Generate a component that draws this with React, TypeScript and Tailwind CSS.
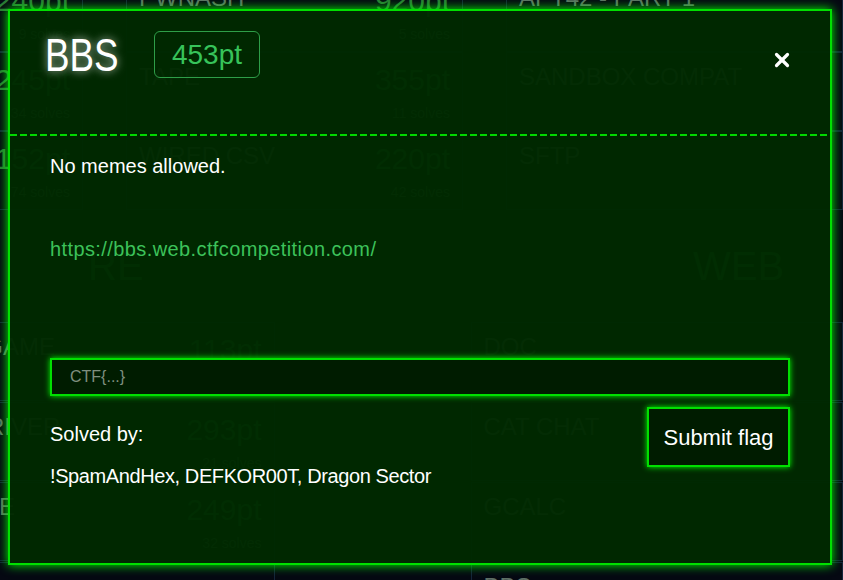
import { X } from "lucide-react";

const TOP_ROWS = [
  [
    { name: "FILTER ENV", pts: "240pt", solves: "9 solves" },
    { name: "PWNASH", pts: "920pt", solves: "5 solves" },
    { name: "APT42 - PART 1", pts: "", solves: "" },
  ],
  [
    { name: "DEVMASTER", pts: "245pt", solves: "34 solves" },
    { name: "TAPE", pts: "355pt", solves: "11 solves" },
    { name: "SANDBOX COMPAT", pts: "", solves: "" },
  ],
  [
    { name: "QUANTUM", pts: "152pt", solves: "74 solves" },
    { name: "WIRED CSV", pts: "220pt", solves: "42 solves" },
    { name: "SFTP", pts: "", solves: "" },
  ],
];

const LOWER_ROWS = [
  [
    { name: "FLAG GAME", pts: "113pt", solves: "18 solves" },
    { name: "DOC", pts: "", solves: "" },
  ],
  [
    { name: "THE DRIVER", pts: "293pt", solves: "21 solves" },
    { name: "CAT CHAT", pts: "", solves: "" },
  ],
  [
    { name: "GSNAKE", pts: "249pt", solves: "32 solves" },
    { name: "GCALC", pts: "", solves: "" },
  ],
  [
    { name: "MOAR", pts: "300pt", solves: "12 solves" },
    { name: "BBS", pts: "", solves: "" },
  ],
];

type Card = { name: string; pts: string; solves: string };

function BoardCard({ card }: { card: Card }) {
  return (
    <div className="w-[420px] h-[79px] border border-[#14243a] flex items-start justify-between px-[12px] pt-[12px]">
      <span className="text-[24px] leading-none text-[#5f6f66]">{card.name}</span>
      <div className="flex flex-col items-end">
        <span className="text-[30px] leading-none text-[#2a7a36]">{card.pts}</span>
        <span className="text-[14px] mt-[8px] text-[#4a6a4e]">{card.solves}</span>
      </div>
    </div>
  );
}

function Board() {
  return (
    <div className="-mt-[27px] -ml-[254px] flex flex-col">
      {TOP_ROWS.map((row, i) => (
        <div key={i} className="flex gap-[43px]">
          {row.map((c) => (
            <BoardCard key={c.name} card={c} />
          ))}
        </div>
      ))}
      <div className="h-[112px] flex items-center pl-[342px]">
        <span className="text-[40px] text-[#2a7a36] w-[605px]">RE</span>
        <span className="text-[40px] text-[#2a7a36]">WEB</span>
      </div>
      {LOWER_ROWS.map((row, i) => (
        <div key={i} className="flex gap-[196px] ml-[156px] h-[80px]">
          {row.map((c) => (
            <BoardCard key={c.name} card={c} />
          ))}
        </div>
      ))}
    </div>
  );
}

export default function App() {
  return (
    <div
      className="relative w-[843px] h-[580px] overflow-hidden bg-[#050812]"
      style={{ fontFamily: "'Liberation Sans', Arial, sans-serif" }}
    >
      <Board />

      {/* modal */}
      <div className="absolute left-[8px] top-[9px] w-[824px] h-[556px] border-2 border-[#00e000] bg-[#002a00]/[0.96] shadow-[0_0_10px_#00ff00] flex flex-col">
        <div className="h-[123px] flex items-start pl-[35px] pr-[37px] pt-[20px]">
          <div className="h-[47px] w-[110px] flex items-center">
            <h1 className="text-[46px] leading-none text-white origin-left scale-x-[0.8] [text-shadow:0_0_10px_rgba(255,255,255,0.7)]">
              BBS
            </h1>
          </div>
          <div className="-ml-[1px] w-[106px] h-[47px] border border-[#2e9e48] rounded-md flex items-center justify-center text-[28px] text-[#37c35a]">
            453pt
          </div>
          <button className="ml-auto mt-[18px] w-[22px] h-[22px] flex items-center justify-center text-white">
            <X size={22} strokeWidth={3.5} />
          </button>
        </div>
        <div className="h-[2px] bg-[repeating-linear-gradient(90deg,#00d800_0_7px,transparent_7px_10px)]" />

        <div className="flex flex-col px-[40px] pt-[16px]">
          <p className="text-[20px] leading-[28px] text-white">No memes allowed.</p>
          <a className="mt-[55px] text-[20px] leading-[28px] text-[#3cc25a] tracking-[0.4px]">
            https://bbs.web.ctfcompetition.com/
          </a>
          <div className="mt-[95px] h-[38px] border-2 border-[#00e000] bg-[#001c00] shadow-[0_0_6px_#00ff00] flex items-center px-[18px]">
            <span className="text-[16px] text-[#7f8f7f]">CTF{"{...}"}</span>
          </div>
          <div className="mt-[11px] flex items-start justify-between">
            <div className="mt-[13px] flex flex-col">
              <span className="text-[20px] leading-[28px] text-white">Solved by:</span>
              <span className="mt-[14px] text-[20px] leading-[28px] text-white tracking-[-0.4px]">
                !SpamAndHex, DEFKOR00T, Dragon Sector
              </span>
            </div>
            <button className="w-[143px] h-[60px] border-2 border-[#00e000] bg-[#001c00] shadow-[0_0_6px_#00ff00] text-[22px] text-white">
              Submit flag
            </button>
          </div>
        </div>
      </div>
    </div>
  );
}
